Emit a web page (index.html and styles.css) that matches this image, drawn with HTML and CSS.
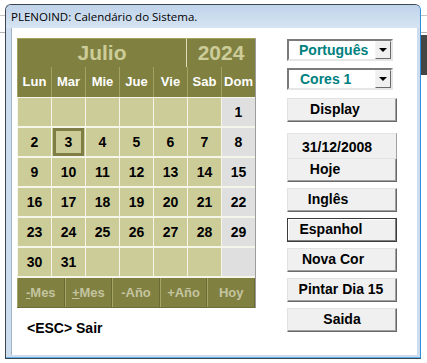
FILE: index.html
```html
<!DOCTYPE html>
<html>

<head>
    <title>PLENOIND</title>
    <link rel="stylesheet" href="styles.css">
</head>

<body>
    <div class="window">
        <div class="titlebar">PLENOIND: Calendário do Sistema.</div>
        <div class="client">
            <div class="calpane">
                <div class="cal">
                    <div class="cal-head">
                        <div class="month">Julio</div>
                        <div class="year">2024</div>
                    </div>
                    <div class="daynames">
                        <div>Lun</div><div>Mar</div><div>Mie</div><div>Jue</div><div>Vie</div><div>Sab</div><div>Dom</div>
                    </div>
                    <div class="days">
                        <div></div><div></div><div></div><div></div><div></div><div></div><div class="sun">1</div>
                        <div>2</div><div><span class="today">3</span></div><div>4</div><div>5</div><div>6</div><div>7</div><div class="sun">8</div>
                        <div>9</div><div>10</div><div>11</div><div>12</div><div>13</div><div>14</div><div class="sun">15</div>
                        <div>16</div><div>17</div><div>18</div><div>19</div><div>20</div><div>21</div><div class="sun">22</div>
                        <div>23</div><div>24</div><div>25</div><div>26</div><div>27</div><div>28</div><div class="sun">29</div>
                        <div>30</div><div>31</div><div></div><div></div><div></div><div></div><div class="sun"></div>
                    </div>
                    <div class="navbar">
                        <div class="nav"><u>-</u>Mes</div>
                        <div class="nav"><u>+</u>Mes</div>
                        <div class="nav">-Año</div>
                        <div class="nav">+Año</div>
                        <div class="nav">Hoy</div>
                    </div>
                </div>
                <div class="esc">&lt;ESC&gt; Sair</div>
            </div>

            <div class="side">
                <div class="combo"><span class="val center">Português</span><span class="arrow"></span></div>
                <div class="combo second"><span class="val">Cores 1</span><span class="arrow"></span></div>
                <div class="btn display">Display</div>
                <div class="datebox">
                    <div class="datelabel">31/12/2008</div>
                    <div class="btn hoje">Hoje</div>
                </div>
                <div class="btn gap ingles">Inglês</div>
                <div class="btn gap espanhol">Espanhol</div>
                <div class="btn gap novacor">Nova Cor</div>
                <div class="btn gap pintar">Pintar Dia 15</div>
                <div class="btn gap saida">Saida</div>
            </div>
        </div>
    </div>
</body>

</html>
```

FILE: styles.css
```css
body {
    margin: 0;
    padding: 4px 0 0 5px;
    height: 363px;
    box-sizing: border-box;
    overflow: hidden;
    background:
        linear-gradient(#c4c4c4, #c4c4c4) 0 15px / 100% 1px no-repeat,
        linear-gradient(#b4b4b4, #b4b4b4) 0 32px / 100% 1px no-repeat,
        linear-gradient(#454545, #454545) 420px 35px / 7px 40px no-repeat,
        #ffffff;
    font-family: "Liberation Sans", Arial, sans-serif;
}

.window {
    width: 416px;
    height: 355px;
    box-sizing: border-box;
    border: 1px solid #3e4650;
    border-right-color: #2a8fd8;
    border-radius: 6px 6px 0 0;
    background: #cddcee;
    box-shadow: inset 0 -1px 0 #5fb0e6;
}

.titlebar {
    height: 23px;
    line-height: 23px;
    padding-left: 5px;
    font-family: "Open Sans", "Noto Sans", sans-serif;
    font-size: 11.5px;
    color: #000;
    background: linear-gradient(#bfd3ea, #d6e4f3);
    border-radius: 5px 5px 0 0;
}

.client {
    display: flex;
    height: 327px;
    margin: 0 3px 0 5px;
    box-sizing: border-box;
    padding: 10px 0 0 5px;
    background: #ffffff;
    border-left: 1px solid #9fb3c9;
}

.calpane {
    width: 239px;
}

.cal {
    width: 239px;
    border-right: 1px solid #9c9c9c;
    box-sizing: border-box;
}

.cal-head {
    display: flex;
    height: 29px;
}

.month,
.year {
    box-sizing: border-box;
    background: #808040;
    border-top: 1px solid #a3a35e;
    color: #cccc99;
    font-size: 21px;
    font-weight: bold;
    text-align: center;
    line-height: 27px;
}

.month {
    width: 170px;
    border-left: 1px solid #a3a35e;
    border-right: 1px solid #dedebc;
}

.year {
    flex: 1;
}

.daynames {
    display: grid;
    grid-template-columns: repeat(7, 33px);
    column-gap: 1px;
    padding-left: 1px;
    height: 30px;
    background: #a3a365;
}

.daynames div {
    background: #808040;
    color: #ffffff;
    font-size: 13px;
    font-weight: bold;
    text-align: center;
    line-height: 30px;
}

.days {
    display: grid;
    grid-template-columns: repeat(7, 33px);
    grid-auto-rows: 28px;
    column-gap: 1px;
    row-gap: 2px;
    padding: 1px 0 2px 1px;
    background: #f5f5ea;
}

.days div {
    background: #cccc99;
    color: #000;
    font-size: 14px;
    font-weight: bold;
    text-align: center;
    line-height: 28px;
}

.days .sun {
    background: #dfdfdf;
}

.today {
    display: block;
    margin: 0 1px 0 1px;
    height: 28px;
    box-sizing: border-box;
    border: 3px solid #7f7f45;
    line-height: 22px;
}

.navbar {
    display: flex;
    height: 30px;
    background: #808040;
    border-bottom: 1px solid #6e6e36;
    box-sizing: border-box;
}

.nav {
    flex: 1;
    border-left: 1px solid #a5a566;
    border-right: 1px solid #6a6a33;
    color: #c4c4a0;
    font-size: 13px;
    font-weight: bold;
    text-align: center;
    line-height: 29px;
}

.esc {
    margin: 12px 0 0 10px;
    font-size: 14px;
    font-weight: bold;
    color: #000;
}

.side {
    margin-left: 31px;
    padding-top: 1px;
    width: 110px;
}

.combo {
    display: flex;
    width: 106px;
    height: 22px;
    box-sizing: border-box;
    border: 2px solid;
    border-color: #7a7a7a #e6e6e6 #e6e6e6 #7a7a7a;
    background: #ffffff;
}

.combo.second {
    margin-top: 7px;
}

.val {
    flex: 1;
    padding-left: 11px;
    color: #008080;
    font-size: 14px;
    font-weight: bold;
    line-height: 18px;
}

.val.center {
    padding-left: 10px;
}

.arrow {
    position: relative;
    width: 16px;
    box-sizing: border-box;
    background: #f0f0f0;
    border: 1px solid;
    border-color: #f4f4f4 #696969 #696969 #f4f4f4;
}

.arrow::after {
    content: "";
    position: absolute;
    left: 3px;
    top: 6px;
    border-left: 4px solid transparent;
    border-right: 4px solid transparent;
    border-top: 4px solid #000;
}

.btn {
    height: 24px;
    box-sizing: border-box;
    background: #f0f0f0;
    border: 1px solid;
    border-color: #e2e2e2 #696969 #696969 #e2e2e2;
    box-shadow: inset -1px -1px 0 #a0a0a0;
    color: #000;
    font-size: 14px;
    font-weight: bold;
    text-align: center;
    line-height: 21px;
}

.display {
    margin-top: 8px;
    padding-right: 14px;
}

.datebox {
    margin-top: 11px;
}

.datelabel {
    height: 25px;
    box-sizing: border-box;
    background: #f0f0f0;
    border-top: 1px solid #e2e2e2;
    border-left: 1px solid #e2e2e2;
    border-right: 1px solid #a0a0a0;
    font-size: 14px;
    font-weight: bold;
    text-align: center;
    line-height: 26px;
    padding-right: 10px;
}

.hoje {
    padding-right: 34px;
}

.gap {
    margin-top: 6px;
}

.ingles {
    padding-right: 28px;
}

.espanhol {
    border: 1px solid #3c3c3c;
    box-shadow: inset -1px -1px 0 #808080, inset 1px 1px 0 #ffffff;
    padding-right: 22px;
}

.novacor {
    padding-right: 18px;
}

.pintar {
    padding-right: 2px;
}
```
